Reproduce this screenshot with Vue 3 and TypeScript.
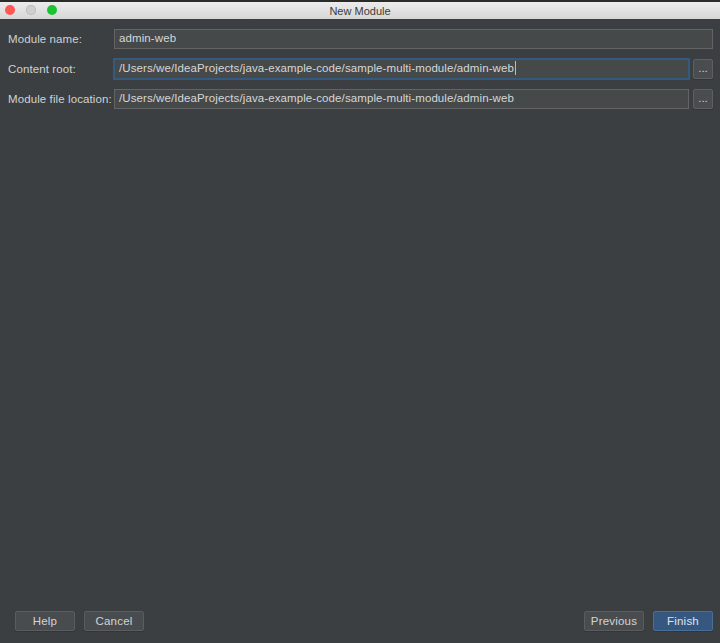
<script setup lang="ts">
const rows = [
  { label: 'Module name:', value: 'admin-web', focused: false, browse: false },
  { label: 'Content root:', value: '/Users/we/IdeaProjects/java-example-code/sample-multi-module/admin-web', focused: true, browse: true },
  { label: 'Module file location:', value: '/Users/we/IdeaProjects/java-example-code/sample-multi-module/admin-web', focused: false, browse: true },
]
</script>

<template>
  <div class="window">
    <div class="strip"></div>
    <header class="titlebar">
      <div class="lights">
        <span class="light red"></span>
        <span class="light grey"></span>
        <span class="light green"></span>
      </div>
      <span class="title">New Module</span>
    </header>
    <main class="form">
      <div v-for="row in rows" :key="row.label" class="row">
        <span class="label">{{ row.label }}</span>
        <div class="field" :class="{ focused: row.focused }">
          <span>{{ row.value }}</span><i v-if="row.focused" class="caret"></i>
        </div>
        <button v-if="row.browse" class="browse">...</button>
      </div>
    </main>
    <footer class="footer">
      <div class="group">
        <button class="btn">Help</button>
        <button class="btn">Cancel</button>
      </div>
      <div class="group">
        <button class="btn">Previous</button>
        <button class="btn primary">Finish</button>
      </div>
    </footer>
  </div>
</template>

<style>
html, body { margin: 0; background: #3c3f41; }
</style>

<style scoped>
.window {
  width: 720px;
  height: 643px;
  display: flex;
  flex-direction: column;
  background: #3c3f41;
  color: #d0d2d3;
  font-family: "Liberation Sans", Arial, sans-serif;
  font-size: 11.5px;
  overflow: hidden;
}
.strip { height: 2px; background: #2a2c28; }
.titlebar {
  height: 17px;
  position: relative;
  display: flex;
  align-items: center;
  justify-content: center;
  background: linear-gradient(#ececec, #d6d6d6);
  color: #3a3a3a;
  font-size: 11px;
}
.lights {
  position: absolute;
  left: 5px;
  top: 3px;
  display: flex;
  gap: 11px;
}
.light { width: 10px; height: 10px; border-radius: 50%; }
.red { background: #fc5753; }
.grey { background: #cfcfcf; box-shadow: inset 0 0 0 1px #bdbdbd; }
.green { background: #19c332; }
.form {
  flex: 1;
  padding-top: 9px;
  display: flex;
  flex-direction: column;
  gap: 8px;
}
.row {
  height: 22px;
  display: flex;
  align-items: center;
  padding: 0 7px 0 8px;
}
.label {
  width: 106px;
  flex: none;
  letter-spacing: 0.1px;
}
.field {
  flex: 1;
  height: 20px;
  box-sizing: border-box;
  display: flex;
  align-items: center;
  padding: 0 0 2px 4px;
  background: #45494a;
  border: 1px solid #646464;
  color: #d6d7d8;
  white-space: nowrap;
  letter-spacing: 0.1px;
}
.field.focused {
  height: 22px;
  margin: 0 -1px;
  padding-left: 4px;
  border: 2px solid #345a80;
}
.caret {
  display: inline-block;
  width: 1px;
  height: 14px;
  margin-left: 1px;
  background: #bbbbbb;
}
.browse {
  flex: none;
  width: 20px;
  height: 20px;
  margin-left: 4px;
  padding: 0 0 2px;
  background: #4a4d4f;
  border: 1px solid #5e6060;
  border-radius: 2px;
  color: #cfd0d1;
  font: inherit;
  box-shadow: 0 1px 1px #333537;
}
.footer {
  display: flex;
  justify-content: space-between;
  padding: 0 7px 12px 15px;
}
.group { display: flex; gap: 9px; }
.btn {
  width: 60px;
  height: 20px;
  padding: 0;
  background: #494c4e;
  border: 1px solid #5a5d5f;
  border-radius: 2px;
  color: #d3d4d5;
  font: inherit;
  font-size: 11.5px;
  letter-spacing: 0.2px;
  box-shadow: 0 1px 1px #333537;
}
.primary {
  background: #365880;
  border-color: #4a6f96;
  color: #dfe3e8;
}
</style>
